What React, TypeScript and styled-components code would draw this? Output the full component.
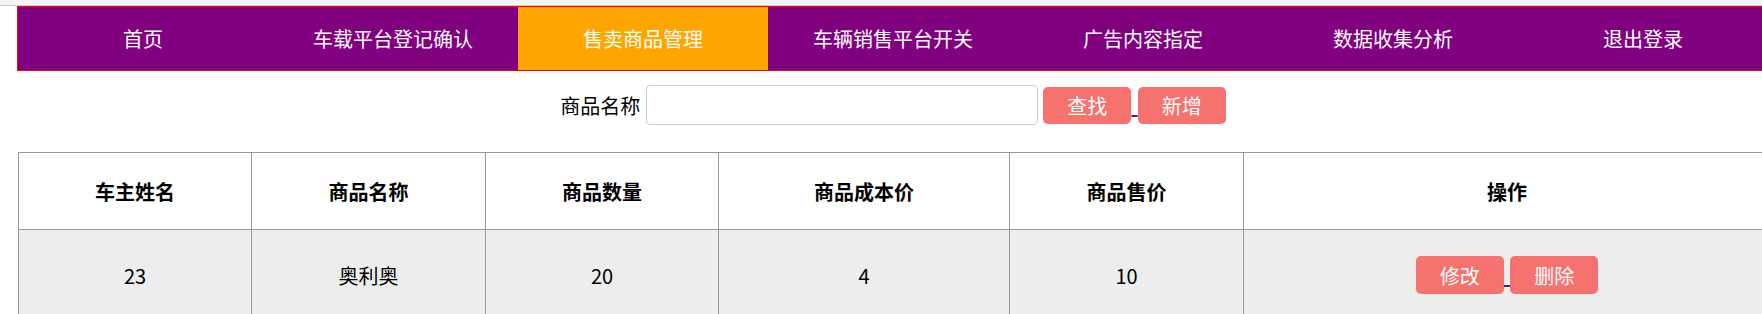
import React from "react";
import styled, { createGlobalStyle } from "styled-components";

const GlobalStyle = createGlobalStyle`
  html, body {
    margin: 0;
    padding: 0;
    overflow: hidden;
    background: #ffffff;
  }
  body {
    font-family: "Noto Sans CJK SC", "Noto Sans", sans-serif;
    color: #000000;
  }
`;

const TopStrip = styled.div`
  height: 5px;
  background: #f5f5f5;
  border-bottom: 1px solid #cccccc;
`;

const Page = styled.div`
  width: 1754px;
  margin-left: 17px;
`;

const Nav = styled.ul`
  display: flex;
  width: 1750px;
  margin: 0;
  padding: 0;
  list-style: none;
  border: 1px solid #ff0000;
  background: #800080;
`;

const NavItem = styled.li<{ $active?: boolean }>`
  flex: 0 0 250px;
  height: 63px;
  display: flex;
  align-items: center;
  justify-content: center;
  color: #ffffff;
  font-size: 20px;
  background: ${(p) => (p.$active ? "#ffa500" : "transparent")};
`;

const SearchBar = styled.div`
  display: flex;
  align-items: center;
  justify-content: center;
  width: 1752px;
  height: 40px;
  margin: 14px 0 27px;
`;

const Label = styled.span`
  font-size: 20px;
  margin-right: 6px;
`;

const SearchInput = styled.input`
  box-sizing: border-box;
  width: 392px;
  height: 40px;
  border: 1px solid #cccccc;
  border-radius: 4px;
  margin: 0 5px 0 0;
  padding: 0 8px;
  font-size: 18px;
  outline: none;
`;

const ActionLink = styled.a`
  color: #551a8b;
  text-decoration: underline;
  font-size: 20px;
  word-spacing: 1.8px;
  white-space: nowrap;
`;

const ActionButton = styled.button<{ $h: number }>`
  display: inline-block;
  box-sizing: border-box;
  width: 88px;
  height: ${(p) => p.$h}px;
  padding: 0;
  border: none;
  border-radius: 5px;
  background: #f6726f;
  color: #ffffff;
  font-family: inherit;
  font-size: 20px;
  cursor: pointer;
`;

const Table = styled.table`
  width: 1752px;
  margin-left: 1px;
  border-collapse: collapse;
  table-layout: fixed;
`;

const HeadCell = styled.th`
  border: 1px solid #999999;
  height: 76px;
  padding: 0;
  font-size: 20px;
  font-weight: bold;
  text-align: center;
  background: #ffffff;
`;

const DataRow = styled.tr`
  background: #ededed;
`;

const DataCell = styled.td`
  border: 1px solid #999999;
  height: 90px;
  padding: 0;
  font-size: 20px;
  text-align: center;
  vertical-align: middle;
`;

const navItems = [
  "首页",
  "车载平台登记确认",
  "售卖商品管理",
  "车辆销售平台开关",
  "广告内容指定",
  "数据收集分析",
  "退出登录",
];

const columns = [
  { title: "车主姓名", width: 233 },
  { title: "商品名称", width: 234 },
  { title: "商品数量", width: 233 },
  { title: "商品成本价", width: 291 },
  { title: "商品售价", width: 234 },
  { title: "操作", width: 527 },
];

const rows = [{ owner: "23", name: "奥利奥", qty: "20", cost: "4", price: "10" }];

export default function App() {
  return (
    <>
      <GlobalStyle />
      <TopStrip />
      <Page>
        <Nav>
          {navItems.map((item) => (
            <NavItem key={item} $active={item === "售卖商品管理"}>
              {item}
            </NavItem>
          ))}
        </Nav>
        <SearchBar>
          <Label>商品名称</Label>
          <SearchInput type="text" />
          <ActionLink href="#">
            <ActionButton $h={37}>查找</ActionButton> <ActionButton $h={37}>新增</ActionButton>
          </ActionLink>
        </SearchBar>
        <Table>
          <colgroup>
            {columns.map((c) => (
              <col key={c.title} style={{ width: c.width }} />
            ))}
          </colgroup>
          <thead>
            <tr>
              {columns.map((c) => (
                <HeadCell key={c.title}>{c.title}</HeadCell>
              ))}
            </tr>
          </thead>
          <tbody>
            {rows.map((r) => (
              <DataRow key={r.name}>
                <DataCell>{r.owner}</DataCell>
                <DataCell>{r.name}</DataCell>
                <DataCell>{r.qty}</DataCell>
                <DataCell>{r.cost}</DataCell>
                <DataCell>{r.price}</DataCell>
                <DataCell>
                  <ActionLink href="#">
                    <ActionButton $h={38}>修改</ActionButton> <ActionButton $h={38}>删除</ActionButton>
                  </ActionLink>
                </DataCell>
              </DataRow>
            ))}
          </tbody>
        </Table>
      </Page>
    </>
  );
}
